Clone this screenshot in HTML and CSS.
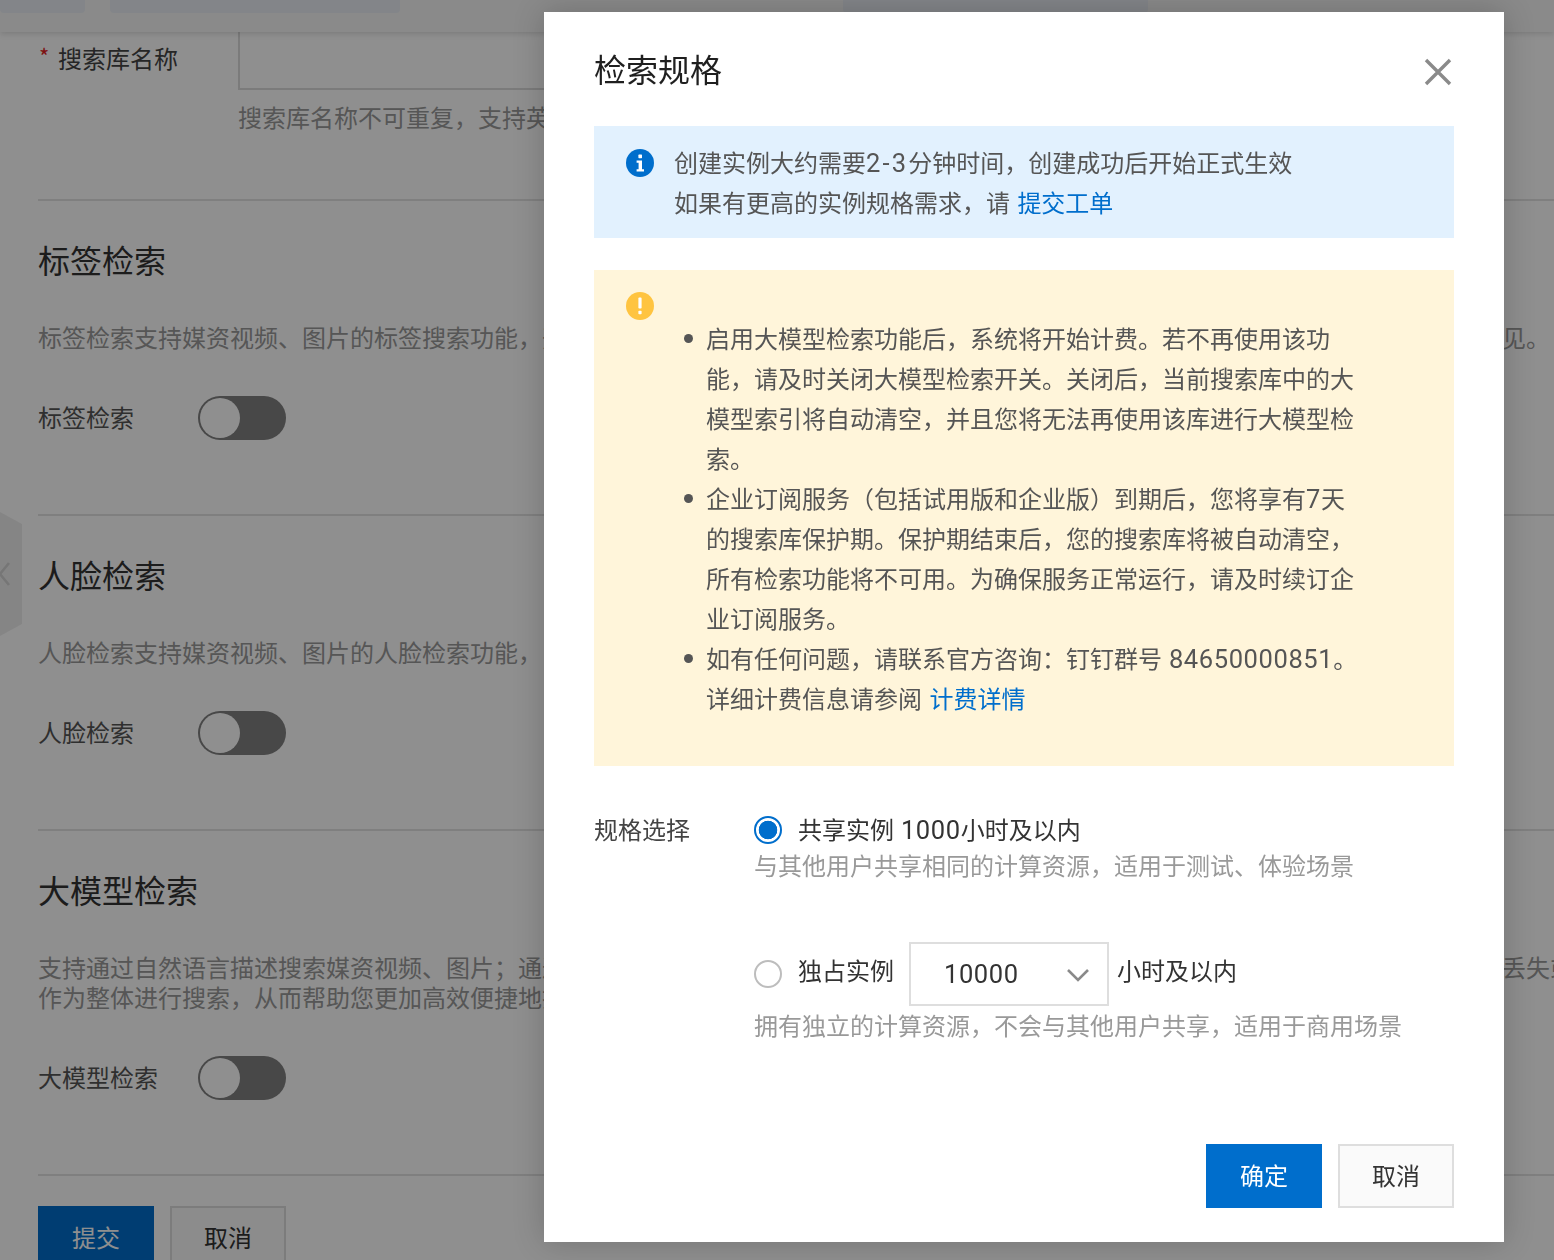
FILE: index.html
```html
<!DOCTYPE html>
<html lang="zh-CN">
<head>
<meta charset="utf-8">
<title>检索规格</title>
<link rel="stylesheet" href="styles.css">
</head>
<body>
<div class="page">
  <header class="topbar">
    <span class="tab tab-a"></span>
    <span class="tab tab-b"></span>
    <span class="tab tab-c"></span>
  </header>
  <div class="side-handle">
    <svg width="12" height="26" viewBox="0 0 12 26"><path d="M10 2 L1 13 L10 24" fill="none" stroke="#d2d2d2" stroke-width="2.6"/></svg>
  </div>
  <main class="form">
    <div class="name-block">
      <div class="name-row">
        <label class="name-label"><span class="star">*</span>搜索库名称</label>
        <div class="name-input"></div>
      </div>
      <p class="hint">搜索库名称不可重复，支持英文、数字和下划线</p>
    </div>
    <section class="section">
      <h2>标签检索</h2>
      <p class="desc">标签检索支持媒资视频、图片的标签搜索功能，开启后系统将自动分析媒资内容并生成标签，检索结果均可在搜索库详情页面中实时查看预见。</p>
      <div class="switch-row"><span class="switch-label">标签检索</span><span class="switch"><i class="knob"></i></span></div>
    </section>
    <section class="section">
      <h2>人脸检索</h2>
      <p class="desc">人脸检索支持媒资视频、图片的人脸检索功能，</p>
      <div class="switch-row"><span class="switch-label">人脸检索</span><span class="switch"><i class="knob"></i></span></div>
    </section>
    <section class="section">
      <h2>大模型检索</h2>
      <p class="desc">支持通过自然语言描述搜索媒资视频、图片；通过大模型理解媒资内容的语义信息，避免关键信息在检索与排序的整个过程中被遗漏或者直丢失或</p>
      <p class="desc">作为整体进行搜索，从而帮助您更加高效便捷地找到内容。</p>
      <div class="switch-row"><span class="switch-label">大模型检索</span><span class="switch"><i class="knob"></i></span></div>
    </section>
    <div class="page-actions">
      <button class="btn btn-primary" type="button">提交</button>
      <button class="btn btn-plain" type="button">取消</button>
    </div>
  </main>
</div>

<div class="overlay"></div>

<div class="modal">
  <div class="modal-head">
    <h1>检索规格</h1>
    <svg class="close" width="28" height="28" viewBox="0 0 28 28"><path d="M2 2 L26 26 M26 2 L2 26" fill="none" stroke="#8a8a8a" stroke-width="3.4"/></svg>
  </div>

  <div class="notice-info">
    <svg class="notice-icon" width="28" height="28" viewBox="0 0 28 28">
      <circle cx="14" cy="14" r="14" fill="#006ecc"/>
      <rect x="12.4" y="5.6" width="3.6" height="3.6" rx="0.6" fill="#fff"/>
      <path d="M10.6 11.4 H16 V20.2 H18 V22.6 H10.6 V20.2 H12.6 V13.8 H10.6 Z" fill="#fff"/>
    </svg>
    <div class="notice-text">
      <p>创建实例大约需要<span class="num num-range">2-3</span>分钟时间，创建成功后开始正式生效</p>
      <p>如果有更高的实例规格需求，请 <a class="link" href="#">提交工单</a></p>
    </div>
  </div>

  <div class="notice-warn">
    <svg class="warn-icon" width="28" height="28" viewBox="0 0 28 28">
      <circle cx="14" cy="14" r="14" fill="#ffc440"/>
      <rect x="12.4" y="5.6" width="3.2" height="11" rx="0.8" fill="#fff"/>
      <rect x="12.4" y="18.8" width="3.2" height="3.4" rx="0.8" fill="#fff"/>
    </svg>
    <ul class="warn-list">
      <li>启用大模型检索功能后，系统将开始计费。若不再使用该功能，请及时关闭大模型检索开关。关闭后，当前搜索库中的大模型索引将自动清空，并且您将无法再使用该库进行大模型检索。</li>
      <li>企业订阅服务（包括试用版和企业版）到期后，您将享有<span class="num">7</span>天的搜索库保护期。保护期结束后，您的搜索库将被自动清空，所有检索功能将不可用。为确保服务正常运行，请及时续订企业订阅服务。</li>
      <li>如有任何问题，请联系官方咨询：钉钉群号<span class="num"> 84650000851</span>。<p class="warn-more">详细计费信息请参阅 <a class="link" href="#">计费详情</a></p></li>
    </ul>
  </div>

  <div class="spec">
    <div class="spec-label">规格选择</div>
    <div class="spec-options">
      <div class="option-row">
        <span class="radio radio-on"></span>
        <span class="option-text option-text-first">共享实例<span class="num"> 1000</span>小时及以内</span>
      </div>
      <p class="option-desc">与其他用户共享相同的计算资源，适用于测试、体验场景</p>
      <div class="option-row option-row-select">
        <span class="radio"></span>
        <span class="option-text option-text-up">独占实例</span>
        <div class="select">
          <span class="num select-value">10000</span>
          <svg width="24" height="14" viewBox="0 0 24 14"><path d="M2 2 L12 12 L22 2" fill="none" stroke="#8a8a8a" stroke-width="2.6"/></svg>
        </div>
        <span class="option-text option-text-up option-after">小时及以内</span>
      </div>
      <p class="option-desc option-desc-tight">拥有独立的计算资源，不会与其他用户共享，适用于商用场景</p>
    </div>
  </div>

  <div class="modal-foot">
    <button class="btn btn-primary" type="button">确定</button>
    <button class="btn btn-plain" type="button">取消</button>
  </div>
</div>
</body>
</html>
```

FILE: styles.css
```css
* { box-sizing: border-box; }
html, body { margin: 0; padding: 0; }
body {
  width: 1554px;
  height: 1260px;
  overflow: hidden;
  background: #fff;
  color: #333;
  font-family: "Noto Sans CJK SC", "Noto Sans", sans-serif;
  font-size: 24px;
  line-height: 40px;
}
p, h1, h2, ul { margin: 0; padding: 0; font-weight: 400; }
a { text-decoration: none; }
.num {
  font-family: Roboto, "Noto Sans", sans-serif;
  font-size: 25.5px;
  line-height: 1;
  letter-spacing: 0.6px;
  white-space: pre;
}
.num-range { letter-spacing: 2.2px; }
.link { color: #006ecc; margin-left: 2px; }

/* Page behind the dialog */
.page { height: 1260px; overflow: hidden; }
.topbar {
  position: relative;
  z-index: 1;
  height: 32px;
  background: #f6f6f6;
  box-shadow: 0 2px 6px rgba(0,0,0,.14);
  display: flex;
}
.tab { height: 13px; background: #e9eef4; border-radius: 0 0 4px 4px; }
.tab-a { width: 85px; }
.tab-b { width: 290px; margin-left: 25px; }
.tab-c { width: 305px; margin-left: 443px; }
.side-handle {
  position: absolute;
  left: 0;
  top: 512px;
  width: 22px;
  height: 124px;
  background: #eee;
  clip-path: polygon(0 0, 100% 12px, 100% 112px, 0 100%);
  display: flex;
  align-items: center;
}
.side-handle svg { margin-left: -1px; }
.form { padding-left: 38px; }
.name-block { height: 169px; border-bottom: 2px solid #e2e2e2; }
.name-row { display: flex; align-items: flex-start; height: 58px; }
.name-label { width: 200px; display: flex; align-items: center; height: 52px; color: #444; }
.star { color: #e02020; width: 20px; font-size: 22px; margin-top: -6px; padding-left: 1px; }
.name-input { width: 1200px; height: 64px; margin-top: -6px; border: 2px solid #dcdcdc; }
.hint { margin: 12px 0 0 200px; line-height: 30px; color: #999; white-space: nowrap; }
.section { border-bottom: 2px solid #e2e2e2; padding: 36px 0 74px; }
.section h2 { font-size: 32px; line-height: 44px; color: #333; }
.desc { line-height: 30px; color: #999; white-space: nowrap; }
.section h2 + .desc { margin-top: 41px; }
.switch-row { display: flex; align-items: center; height: 44px; margin-top: 44px; color: #555; }
.switch-label { width: 160px; padding-bottom: 2px; }
.switch {
  width: 88px;
  height: 44px;
  border-radius: 22px;
  background: #808080;
  padding: 2px;
  display: block;
}
.knob { display: block; width: 40px; height: 40px; border-radius: 50%; background: #fff; }
.page-actions { display: flex; gap: 16px; margin-top: 30px; }

.btn {
  width: 116px;
  height: 64px;
  border: 2px solid transparent;
  padding: 0 0 2px;
  font: inherit;
  border-radius: 0;
}
.btn-primary { background: #006ecc; border-color: #006ecc; color: #fff; }
.btn-plain { background: #fafafa; border-color: #dedede; color: #333; }

.overlay {
  position: fixed;
  inset: 0;
  z-index: 5;
  background: rgba(0,0,0,.44);
}

/* Dialog */
.modal {
  position: absolute;
  z-index: 6;
  left: 544px;
  top: 12px;
  width: 960px;
  height: 1230px;
  padding: 36px 50px 34px;
  background: #fff;
  box-shadow: 0 0 30px rgba(0,0,0,.2);
  display: flex;
  flex-direction: column;
}
.modal-head { display: flex; justify-content: space-between; align-items: center; height: 44px; }
.modal-head h1 { font-size: 32px; line-height: 44px; color: #1f1f1f; margin-bottom: 4px; }
.close { margin: 4px 2px 0 0; }

.notice-info {
  display: flex;
  gap: 20px;
  margin-top: 34px;
  height: 112px;
  padding: 16px 32px 16px;
  background: #e2f1fe;
  color: #555;
}
.notice-icon { flex: none; margin-top: 7px; }

.notice-warn {
  margin-top: 32px;
  height: 496px;
  padding: 22px 96px 0 32px;
  background: #fff5da;
  color: #555;
}
.warn-icon { display: block; }
.warn-list { margin: -2px 0 0 80px; list-style: none; }
.warn-list li { position: relative; }
.warn-list li::before {
  content: "";
  position: absolute;
  left: -22.5px;
  top: 16px;
  width: 9px;
  height: 9px;
  border-radius: 50%;
  background: #555;
}

.spec { display: flex; margin-top: 44px; }
.spec-label { width: 160px; color: #444; margin-top: -1px; height: 40px; }
.spec-options { flex: 1; }
.option-row { display: flex; align-items: center; height: 40px; color: #333; }
.radio {
  flex: none;
  width: 28px;
  height: 28px;
  border-radius: 50%;
  border: 2px solid #bdbdbd;
  background: #fff;
  margin-right: 16px;
}
.radio-on {
  border-color: #006ecc;
  background: radial-gradient(circle, #006ecc 0 9px, #fff 9.6px);
}
.option-desc { line-height: 32px; color: #999; margin-top: -1px; }
.option-row-select { height: 64px; margin-top: 61px; }
.option-text-first { position: relative; top: -1px; }
.option-text-up { position: relative; top: -4px; }
.select {
  width: 200px;
  height: 64px;
  margin-left: 15px;
  border: 2px solid #dedede;
  padding: 2px 17px 0 33px;
  display: flex;
  align-items: center;
  justify-content: space-between;
}
.select-value { color: #333; }
.option-after { margin-left: 8px; }
.option-desc-tight { margin-top: 3px; }

.modal-foot { margin-top: auto; display: flex; justify-content: flex-end; gap: 16px; }
```
